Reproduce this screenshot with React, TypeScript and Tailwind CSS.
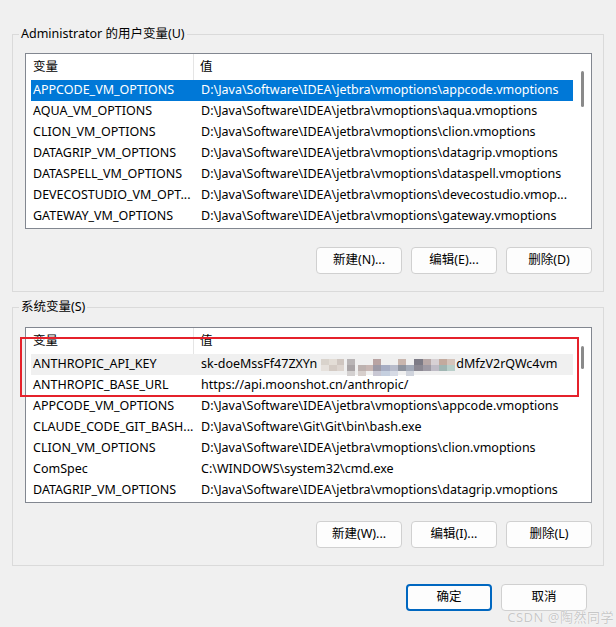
import React from "react";

const FONT = '"Noto Sans", "Noto Sans CJK SC", sans-serif';

type Row = { name: string; value: React.ReactNode; state?: "sel" | "hover" };

const userRows: Row[] = [
  { name: "APPCODE_VM_OPTIONS", value: "D:\\Java\\Software\\IDEA\\jetbra\\vmoptions\\appcode.vmoptions", state: "sel" },
  { name: "AQUA_VM_OPTIONS", value: "D:\\Java\\Software\\IDEA\\jetbra\\vmoptions\\aqua.vmoptions" },
  { name: "CLION_VM_OPTIONS", value: "D:\\Java\\Software\\IDEA\\jetbra\\vmoptions\\clion.vmoptions" },
  { name: "DATAGRIP_VM_OPTIONS", value: "D:\\Java\\Software\\IDEA\\jetbra\\vmoptions\\datagrip.vmoptions" },
  { name: "DATASPELL_VM_OPTIONS", value: "D:\\Java\\Software\\IDEA\\jetbra\\vmoptions\\dataspell.vmoptions" },
  { name: "DEVECOSTUDIO_VM_OPT...", value: "D:\\Java\\Software\\IDEA\\jetbra\\vmoptions\\devecostudio.vmop..." },
  { name: "GATEWAY_VM_OPTIONS", value: "D:\\Java\\Software\\IDEA\\jetbra\\vmoptions\\gateway.vmoptions" },
];

const mosaic: [number, number, number, string][] = [
  [4, 5, 8, "#d9d3cc"], [12, 5, 8, "#e3ddd6"], [20, 5, 7, "#cfc6c0"],
  [4, 11, 8, "#e6e1dc"], [12, 11, 8, "#d4cbc4"], [20, 11, 7, "#ddd5cf"],
  [30, 5, 8, "#b9b5b6"], [30, 11, 8, "#a9a4a6"], [30, 17, 8, "#d3d0d0"],
  [41, 11, 8, "#bdb2b0"], [49, 11, 7, "#c8b7b4"], [41, 17, 8, "#d7cfcc"],
  [56, 5, 8, "#b9a4a3"], [56, 11, 8, "#9d9aa6"], [56, 17, 8, "#c8c7d3"],
  [64, 11, 9, "#a7aec4"], [64, 17, 9, "#c5cfdf"], [73, 11, 8, "#b8bccb"],
  [73, 17, 8, "#d6dae4"], [81, 5, 8, "#c9b6ae"], [81, 11, 8, "#8f949f"],
  [89, 11, 8, "#a3aab8"], [89, 17, 8, "#cfd3dc"], [97, 5, 9, "#7d7b86"],
  [97, 11, 9, "#8b8892"], [106, 5, 8, "#b8a9a8"], [106, 11, 8, "#9e9aa4"],
  [114, 5, 8, "#d7d1d4"], [114, 11, 8, "#bfbcc6"], [122, 5, 8, "#c3aa9e"],
  [122, 11, 8, "#a0b6b3"], [130, 5, 8, "#d5c4bb"], [130, 11, 8, "#b9cfca"],
];

function Mosaic() {
  return (
    <svg width="139" height="22" className="shrink-0" viewBox="0 0 139 22">
      {mosaic.map(([x, y, w, c], i) => (
        <rect key={i} x={x} y={y} width={w} height={6} fill={c} />
      ))}
    </svg>
  );
}

const sysRows: Row[] = [
  {
    name: "ANTHROPIC_API_KEY",
    value: (
      <span className="flex items-center">
        <span>sk-doeMssFf47ZXYn</span>
        <Mosaic />
        <span>dMfzV2rQWc4vm</span>
      </span>
    ),
    state: "hover",
  },
  { name: "ANTHROPIC_BASE_URL", value: "https://api.moonshot.cn/anthropic/" },
  { name: "APPCODE_VM_OPTIONS", value: "D:\\Java\\Software\\IDEA\\jetbra\\vmoptions\\appcode.vmoptions" },
  { name: "CLAUDE_CODE_GIT_BASH...", value: "D:\\Java\\Software\\Git\\Git\\bin\\bash.exe" },
  { name: "CLION_VM_OPTIONS", value: "D:\\Java\\Software\\IDEA\\jetbra\\vmoptions\\clion.vmoptions" },
  { name: "ComSpec", value: "C:\\WINDOWS\\system32\\cmd.exe" },
  { name: "DATAGRIP_VM_OPTIONS", value: "D:\\Java\\Software\\IDEA\\jetbra\\vmoptions\\datagrip.vmoptions" },
];

function ListView({ rows, thumbTop, thumbH }: { rows: Row[]; thumbTop: string; thumbH: string }) {
  return (
    <div className="flex h-[176px] w-[567px] overflow-hidden border border-[#828790] bg-white">
      <div className="flex w-[547px] flex-col pl-[5px]">
        <div className="flex h-[26px] shrink-0 items-center">
          <div className="flex h-full w-[163px] items-center border-r border-[#e5e5e5] pl-[2px] pt-[1px]">变量</div>
          <div className="pl-[6px] pt-[1px]">值</div>
        </div>
        {rows.map((r, i) => (
          <div
            key={i}
            className={
              r.state === "sel"
                ? "flex h-[21px] shrink-0 items-center whitespace-nowrap bg-[#0078d7] text-white"
                : r.state === "hover"
                ? "flex h-[21px] shrink-0 items-center whitespace-nowrap bg-[#f0f0f0]"
                : "flex h-[21px] shrink-0 items-center whitespace-nowrap"
            }
          >
            <div className="w-[163px] shrink-0 pl-[2px]">{r.name}</div>
            <div className="pl-[7px]">{r.value}</div>
          </div>
        ))}
      </div>
      <div className="flex w-[18px] justify-center">
        <div className={`w-[3px] rounded-full bg-[#8a8a8a] ${thumbTop} ${thumbH}`} />
      </div>
    </div>
  );
}

function Btn({ children, primary }: { children: React.ReactNode; primary?: boolean }) {
  return (
    <div
      className={
        primary
          ? "flex h-[27px] w-[86px] items-center justify-center rounded-[4px] border-2 border-[#0067c0] bg-[#fdfdfd]"
          : "flex h-[27px] w-[86px] items-center justify-center rounded-[4px] border border-[#d0d0d0] bg-[#fdfdfd]"
      }
    >
      {children}
    </div>
  );
}

export default function App() {
  return (
    <div
      className="relative h-[627px] w-[616px] overflow-hidden bg-[#f0f0f0] text-[12.5px] leading-none text-black"
      style={{ fontFamily: FONT }}
    >
      <div className="flex flex-col px-[12px] pt-[26px]">
        <fieldset className="w-[592px] border border-[#dadada] p-0">
          <legend className="ml-[6px] px-[2px] leading-[16px]">Administrator 的用户变量(U)</legend>
          <div className="flex flex-col pb-[17px] pl-[12px] pt-[11px]">
            <ListView rows={userRows} thumbTop="mt-[17px]" thumbH="h-[36px]" />
            <div className="mt-[18px] flex w-[567px] justify-end gap-[9px]">
              <Btn>新建(N)...</Btn>
              <Btn>编辑(E)...</Btn>
              <Btn>删除(D)</Btn>
            </div>
          </div>
        </fieldset>

        <fieldset className="mt-[7px] w-[592px] border border-[#dadada] p-0">
          <legend className="ml-[6px] px-[2px] leading-[16px]">系统变量(S)</legend>
          <div className="flex flex-col pb-[17px] pl-[12px] pt-[12px]">
            <div className="relative">
              <ListView rows={sysRows} thumbTop="mt-[18px]" thumbH="h-[23px]" />
              <div className="absolute left-[-5px] top-[10px] h-[60px] w-[559px] border-2 border-[#e5212b]" />
            </div>
            <div className="mt-[18px] flex w-[567px] justify-end gap-[9px]">
              <Btn>新建(W)...</Btn>
              <Btn>编辑(I)...</Btn>
              <Btn>删除(L)</Btn>
            </div>
          </div>
        </fieldset>

        <div className="mt-[18px] flex justify-end gap-[9px] pr-[17px]">
          <Btn primary>确定</Btn>
          <Btn>取消</Btn>
        </div>
      </div>

      <div
        className="absolute bottom-[3px] right-[2px] text-[13px] tracking-[0.5px] text-[#c8c8c8]"
        style={{ textShadow: "0 0 1px #fff, 0 0 1px #fff" }}
      >
        CSDN @陶然同学
      </div>
    </div>
  );
}
